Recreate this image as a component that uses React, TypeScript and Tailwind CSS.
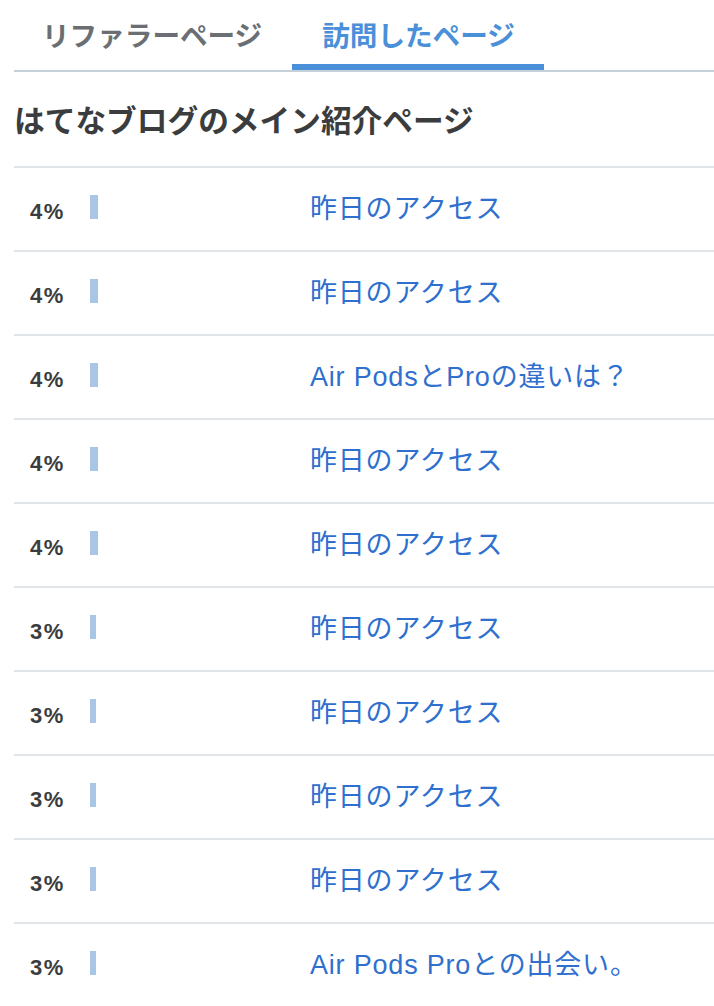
import React from "react";

const rows: { pct: number; title: string }[] = [
  { pct: 4, title: "昨日のアクセス" },
  { pct: 4, title: "昨日のアクセス" },
  { pct: 4, title: "Air PodsとProの違いは？" },
  { pct: 4, title: "昨日のアクセス" },
  { pct: 4, title: "昨日のアクセス" },
  { pct: 3, title: "昨日のアクセス" },
  { pct: 3, title: "昨日のアクセス" },
  { pct: 3, title: "昨日のアクセス" },
  { pct: 3, title: "昨日のアクセス" },
  { pct: 3, title: "Air Pods Proとの出会い。" },
];

export default function App() {
  return (
    <div
      className="w-[714px] min-h-[1006px] bg-white pl-[14px] overflow-hidden"
      style={{ fontFamily: '"Liberation Sans", "Noto Sans CJK JP", sans-serif' }}
    >
      <div className="flex border-b-2 border-[#c5d0d8]">
        <div className="pl-[28px] pr-[30px] pt-[17px] pb-[7px] text-[27.6px] leading-[40px] font-bold text-[#6b6f73] border-b-[6px] border-transparent">
          リファラーページ
        </div>
        <div className="pl-[30px] pr-[29px] pt-[17px] pb-[7px] text-[27.6px] leading-[40px] font-bold text-[#4a90d9] border-b-[6px] border-[#4a90d9]">
          訪問したページ
        </div>
      </div>
      <div className="h-[94px] flex items-center pt-[6px] text-[30.7px] font-bold text-[#3a3c3e]">
        はてなブログのメイン紹介ページ
      </div>
      <div>
        {rows.map((r, i) => (
          <div
            key={i}
            className="h-[84px] border-t-2 border-[#e1e5e9] flex items-center pl-[16px]"
          >
            <div className="w-[280px] flex items-baseline">
              <div className="w-[60px] text-[22px] leading-none font-bold text-[#3a3c3e] tracking-[1.5px]">
                {r.pct}%
              </div>
              <div className="h-[24px] bg-[#a9c6e6]" style={{ width: r.pct * 2 }} />
            </div>
            <div className="text-[27px] leading-none text-[#2f6fce] tracking-[0.8px]">{r.title}</div>
          </div>
        ))}
      </div>
    </div>
  );
}
